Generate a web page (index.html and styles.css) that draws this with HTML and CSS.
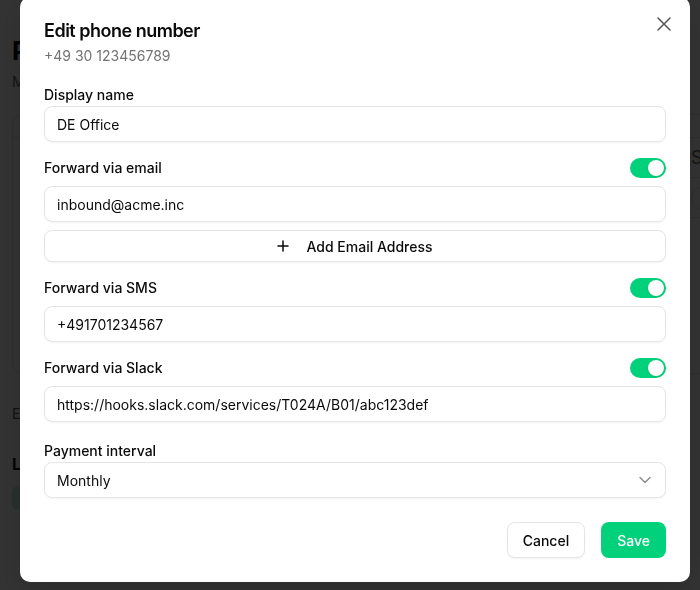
FILE: index.html
```html
<!DOCTYPE html>
<html lang="en">
<head>
<meta charset="utf-8">
<title>Edit phone number</title>
<link rel="stylesheet" href="styles.css">
</head>
<body>
<div class="page">
  <h1 class="page-title">Phone numbers</h1>
  <p class="page-sub">Manage your phone numbers and forwarding</p>
  <div class="page-grid">
    <div class="card">
      <div class="card-head"></div>
      <div class="card-body">
        <div class="card-row"><span class="muted">Status</span></div>
        <div class="card-row"><span class="pill"></span></div>
      </div>
    </div>
  </div>
  <div class="page-lower">
    <p class="page-small">Email</p>
    <p class="page-strong">Language</p>
    <div class="page-box"></div>
  </div>
</div>

<div class="overlay"></div>

<div class="dialog" role="dialog" aria-labelledby="dlg-title">
  <button class="close" aria-label="Close">
    <svg width="16" height="16" viewBox="0 0 16 16" fill="none" stroke="#555" stroke-width="1.5" stroke-linecap="round"><path d="M2 2 L14 14 M14 2 L2 14"/></svg>
  </button>
  <header class="dialog-head">
    <h2 id="dlg-title" class="dialog-title">Edit phone number</h2>
    <p class="dialog-sub">+49 30 123456789</p>
  </header>

  <div class="form">
    <div class="field">
      <label class="label plain">Display name</label>
      <div class="input">DE Office</div>
    </div>

    <div class="field">
      <div class="field-head">
        <span class="label">Forward via email</span>
        <span class="toggle"><span class="knob"></span></span>
      </div>
      <div class="input">inbound@acme.inc</div>
      <button class="btn-outline wide">
        <svg class="plus" width="12" height="12" viewBox="0 0 12 12" fill="none" stroke="#0a0a0a" stroke-width="1.5" stroke-linecap="round"><path d="M6 1 V11 M1 6 H11"/></svg>
        <span>Add Email Address</span>
      </button>
    </div>

    <div class="field">
      <div class="field-head">
        <span class="label">Forward via SMS</span>
        <span class="toggle"><span class="knob"></span></span>
      </div>
      <div class="input">+491701234567</div>
    </div>

    <div class="field">
      <div class="field-head">
        <span class="label">Forward via Slack</span>
        <span class="toggle"><span class="knob"></span></span>
      </div>
      <div class="input">https://hooks.slack.com/services/T024A/B01/abc123def</div>
    </div>

    <div class="field">
      <label class="label plain">Payment interval</label>
      <div class="input select">
        <span>Monthly</span>
        <svg width="16" height="16" viewBox="0 0 16 16" fill="none" stroke="#8a8a8a" stroke-width="1.4" stroke-linecap="round" stroke-linejoin="round"><path d="M3 5.5 L8 10.5 L13 5.5"/></svg>
      </div>
    </div>
  </div>

  <footer class="dialog-foot">
    <button class="btn-outline">Cancel</button>
    <button class="btn-primary">Save</button>
  </footer>
</div>
</body>
</html>
```

FILE: styles.css
```css
* { box-sizing: border-box; }
html, body {
  margin: 0;
  height: 100%;
  overflow: hidden;
}
body {
  font-family: Inter, "Noto Sans", "Liberation Sans", sans-serif;
  color: #0a0a0a;
  background: #ffffff;
}

/* background page */
.page {
  padding: 36px 0 0 12px;
  width: 1200px;
}
.page-title {
  margin: 0;
  font-size: 26px;
  line-height: 30px;
  font-weight: 700;
}
.page-sub {
  margin: 6px 0 0;
  font-size: 14px;
  line-height: 20px;
  color: #666;
}
.page-grid {
  margin-top: 22px;
}
.card {
  border: 1px solid #e5e5e5;
  border-radius: 10px;
  height: 260px;
}
.card-head {
  height: 23px;
  border-bottom: 1px solid #e5e5e5;
}
.card-body {
  padding-left: 678px;
}
.card-row {
  height: 40px;
  display: flex;
  align-items: center;
  border-bottom: 1px solid #e5e5e5;
  font-size: 18px;
}
.muted { color: #666; }
.pill {
  width: 40px;
  height: 24px;
  border-radius: 12px;
  border: 1px solid #ddd;
}
.page-lower {
  margin-top: 30px;
}
.page-small {
  margin: 0;
  font-size: 14px;
  line-height: 20px;
  color: #555;
}
.page-strong {
  margin: 30px 0 0;
  font-size: 16px;
  font-weight: 700;
}
.page-box {
  margin-top: 12px;
  width: 200px;
  height: 24px;
  border-radius: 6px;
  background: #c8f0dc;
}

.overlay {
  position: fixed;
  inset: 0;
  background: rgba(0, 0, 0, 0.8);
}

/* dialog */
.dialog {
  position: fixed;
  left: 20px;
  top: -3px;
  width: 670px;
  height: 585px;
  background: #fff;
  border-radius: 10px;
  padding: 20px 24px 24px;
  box-shadow: 0 10px 30px rgba(0,0,0,0.15);
  display: flex;
  flex-direction: column;
}
.close {
  position: absolute;
  top: 19px;
  right: 18px;
  width: 16px;
  height: 16px;
  padding: 0;
  border: 0;
  background: none;
  display: flex;
}
.dialog-head { margin: 0; }
.dialog-title {
  margin: 0;
  font-size: 18px;
  line-height: 28px;
  font-weight: 600;
  letter-spacing: -0.5px;
}
.dialog-sub {
  margin: 1px 0 0;
  font-size: 14px;
  line-height: 20px;
  color: #737373;
}

.form {
  margin-top: 16px;
  display: flex;
  flex-direction: column;
  gap: 16px;
}
.field {
  display: flex;
  flex-direction: column;
  gap: 8px;
}
.label {
  font-size: 14px;
  line-height: 20px;
  font-weight: 500;
}
.label.plain {
  margin-top: 3px;
  margin-bottom: -7px;
}
.field-head {
  display: flex;
  justify-content: space-between;
  align-items: center;
  height: 20px;
}
.toggle {
  width: 36px;
  height: 20px;
  border-radius: 10px;
  background: #00d17a;
  display: flex;
  justify-content: flex-end;
  align-items: center;
  padding: 2px;
}
.knob {
  width: 16px;
  height: 16px;
  border-radius: 50%;
  background: #fff;
  box-shadow: 0 1px 2px rgba(0,0,0,0.1);
}
.input {
  height: 36px;
  border: 1px solid #e5e5e5;
  border-radius: 8px;
  padding: 0 12px;
  display: flex;
  align-items: center;
  font-size: 14px;
  box-shadow: 0 1px 2px rgba(0,0,0,0.05);
}
.select {
  justify-content: space-between;
}
.btn-outline {
  font-family: inherit;
  height: 36px;
  padding: 0 15px;
  border: 1px solid #e5e5e5;
  border-radius: 8px;
  background: #fff;
  color: #0a0a0a;
  font-size: 14px;
  font-weight: 500;
  display: flex;
  align-items: center;
  justify-content: center;
  box-shadow: 0 1px 2px rgba(0,0,0,0.05);
}
.btn-outline.wide {
  height: 32px;
}
.plus { margin-right: 17px; }
.btn-primary {
  font-family: inherit;
  height: 36px;
  padding: 0 16px;
  border: 0;
  border-radius: 8px;
  background: #00d17a;
  color: #fff;
  font-size: 14px;
  font-weight: 500;
}
.dialog-foot {
  margin-top: 24px;
  display: flex;
  justify-content: flex-end;
  gap: 16px;
}
```
